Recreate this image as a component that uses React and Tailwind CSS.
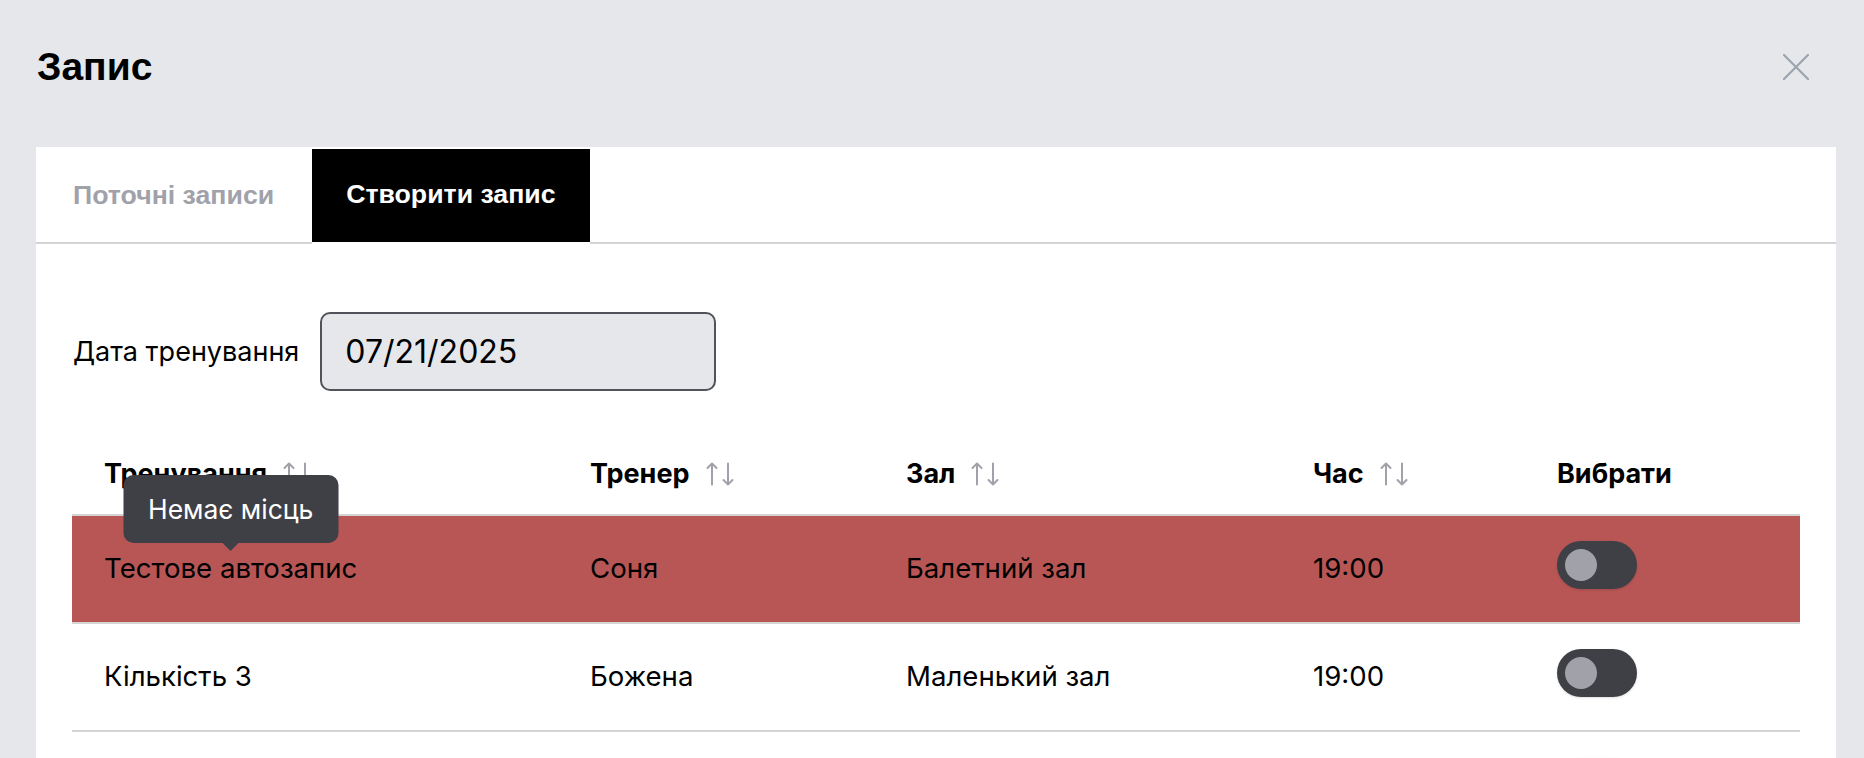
import React from 'react';

const rows = [
  { name: 'Тестове автозапис', coach: 'Соня', hall: 'Балетний зал', time: '19:00', full: true },
  { name: 'Кількість 3', coach: 'Божена', hall: 'Маленький зал', time: '19:00', full: false },
];

const SortIcon = () => (
  <svg width="28" height="24" viewBox="0 0 28 24" fill="none" stroke="#a1a1aa" strokeWidth="2" strokeLinecap="round" strokeLinejoin="round" className="ml-4 shrink-0">
    <path d="M6 1.5V22.5M1.5 6L6 1.5L10.5 6" />
    <path d="M22 1.5V22.5M17.5 18L22 22.5L26.5 18" />
  </svg>
);

const Toggle = () => (
  <div className="w-[80px] h-[48px] rounded-full bg-[#3f3f46] flex items-center pl-[8px] shadow-sm">
    <div className="w-[32px] h-[32px] rounded-full bg-[#a1a1aa]"></div>
  </div>
);

const cols = 'grid grid-cols-[486px_316px_407px_244px_1fr]';

const App = () => {
  return (
    <div className="h-screen w-full bg-[#e5e7eb] overflow-hidden font-['Inter',sans-serif] text-black">
      <div className="flex items-center justify-between pl-[37px] pr-[55px] pt-[47px] pb-[60px]">
        <h1 className="font-['Liberation_Sans',Arial,sans-serif] font-bold text-[39px] leading-[40px]">Запис</h1>
        <button className="w-[26px] h-[26px]">
          <svg width="26" height="26" viewBox="0 0 26 26" stroke="#9ca3af" strokeWidth="2.2" strokeLinecap="round">
            <path d="M1 1L25 25M25 1L1 25" />
          </svg>
        </button>
      </div>

      <div className="ml-[36px] w-[1800px] bg-white">
        <div className="flex gap-1 pl-[3px] pt-[2px] border-b-2 border-[#d4d4d4] font-['Liberation_Sans',Arial,sans-serif] font-bold text-[26.7px]">
          <button className="h-[93px] px-[34px] text-[#a1a1aa]">Поточні записи</button>
          <button className="h-[95px] -mb-[2px] px-[34px] pb-[2px] bg-black text-white border-b-2 border-white">Створити запис</button>
        </div>

        <div className="px-[36px]">
          <div className="flex items-center mt-[68px]">
            <span className="text-[27px] leading-[32px] pl-[1px] mr-[21px]">Дата тренування</span>
            <div className="w-[396px] h-[79px] rounded-[10px] border-2 border-[#52525b] bg-[#e5e7eb] flex items-center pl-[23px] text-[32px]">
              07/21/2025
            </div>
          </div>

          <div className="mt-[43px]">
            <div className={`${cols} h-[82px] items-center border-b-2 border-[#d4d4d4] font-bold text-[27px]`}>
              <div className="flex items-center pl-[32px]">Тренування<SortIcon /></div>
              <div className="flex items-center pl-[32px]">Тренер<SortIcon /></div>
              <div className="flex items-center pl-[32px]">Зал<SortIcon /></div>
              <div className="flex items-center pl-[32px]">Час<SortIcon /></div>
              <div className="flex items-center pl-[32px]">Вибрати</div>
            </div>

            {rows.map((row, i) => (
              <div
                key={i}
                className={`${cols} h-[108px] items-center border-b-2 border-[#d4d4d4] text-[27.6px] ${row.full ? 'bg-[#b85656]' : 'bg-white'}`}
              >
                <div className="pl-[32px]">
                  <span className="relative inline-block leading-[32px]">
                    {row.name}
                    {row.full && (
                      <span className="absolute bottom-full left-1/2 -translate-x-1/2 mb-[9px] w-[215px] h-[68px] rounded-[10px] bg-[#3f3f46] text-white text-[26.5px] flex items-center justify-center whitespace-nowrap">
                        Немає місць
                        <span className="absolute top-full left-1/2 -translate-x-1/2 w-0 h-0 border-x-[8px] border-x-transparent border-t-[8px] border-t-[#3f3f46]"></span>
                      </span>
                    )}
                  </span>
                </div>
                <div className="pl-[32px]">{row.coach}</div>
                <div className="pl-[32px]">{row.hall}</div>
                <div className="pl-[32px]">{row.time}</div>
                <div className="pl-[32px] -mt-[8px]"><Toggle /></div>
              </div>
            ))}

            <div className={`${cols} h-[108px] items-center`}>
              <div></div>
              <div></div>
              <div></div>
              <div></div>
              <div className="pl-[32px] -mt-[8px]"><Toggle /></div>
            </div>
          </div>
        </div>
      </div>
    </div>
  );
};

export default App;
